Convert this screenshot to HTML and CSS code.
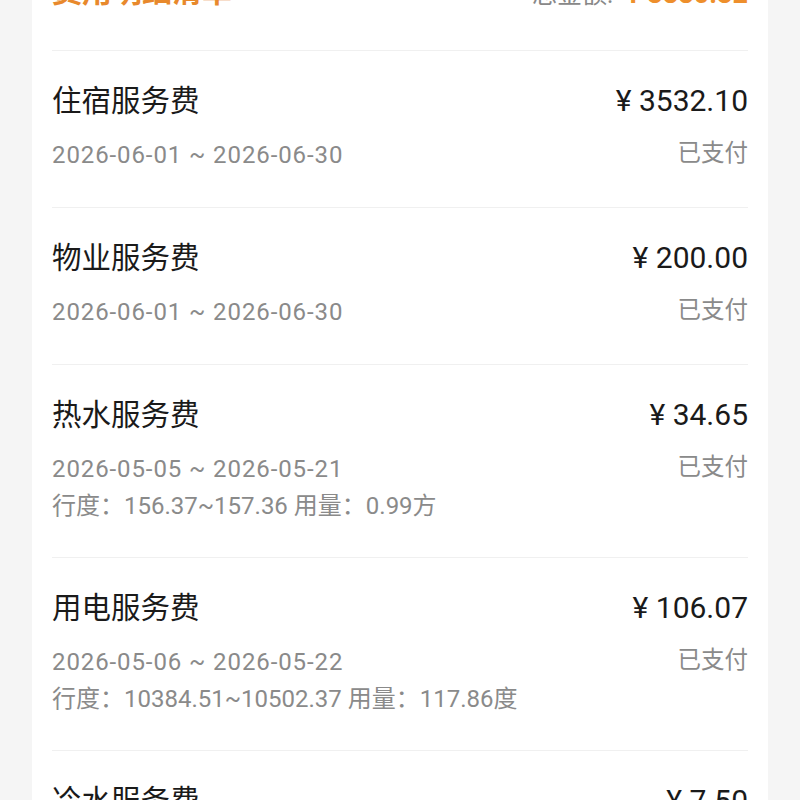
FILE: index.html
```html
<!DOCTYPE html>
<html lang="zh-CN">
<head>
<meta charset="utf-8">
<title>费用明细清单</title>
<link rel="stylesheet" href="styles.css">
</head>
<body>
<div class="page">
  <div class="card">
    <div class="header">
      <div class="header-title">费用明细清单</div>
      <div class="header-total"><span class="total-label">总金额:</span><span class="total-value">¥ 3880.32</span></div>
    </div>
    <div class="row">
      <div class="left">
        <div class="name">住宿服务费</div>
        <div class="sub date">2026-06-01 ~ 2026-06-30</div>
      </div>
      <div class="right">
        <div class="amount">¥ 3532.10</div>
        <div class="status">已支付</div>
      </div>
    </div>
    <div class="row">
      <div class="left">
        <div class="name">物业服务费</div>
        <div class="sub date">2026-06-01 ~ 2026-06-30</div>
      </div>
      <div class="right">
        <div class="amount">¥ 200.00</div>
        <div class="status">已支付</div>
      </div>
    </div>
    <div class="row">
      <div class="left">
        <div class="name">热水服务费</div>
        <div class="sub date">2026-05-05 ~ 2026-05-21</div>
        <div class="sub usage">行度：156.37~157.36 用量：0.99方</div>
      </div>
      <div class="right">
        <div class="amount">¥ 34.65</div>
        <div class="status">已支付</div>
      </div>
    </div>
    <div class="row">
      <div class="left">
        <div class="name">用电服务费</div>
        <div class="sub date">2026-05-06 ~ 2026-05-22</div>
        <div class="sub usage">行度：10384.51~10502.37 用量：117.86度</div>
      </div>
      <div class="right">
        <div class="amount">¥ 106.07</div>
        <div class="status">已支付</div>
      </div>
    </div>
    <div class="row">
      <div class="left">
        <div class="name">冷水服务费</div>
        <div class="sub date">2026-05-06 ~ 2026-05-22</div>
      </div>
      <div class="right">
        <div class="amount">¥ 7.50</div>
        <div class="status">已支付</div>
      </div>
    </div>
  </div>
</div>
</body>
</html>
```
FILE: styles.css
```css
html, body {
  margin: 0;
  padding: 0;
  background: #f5f5f5;
}
body {
  font-family: Roboto, "Noto Sans CJK SC", sans-serif;
  color: #1a1a1a;
  overflow: hidden;
  height: 800px;
}
.page {
  margin-top: -58px;
  padding: 0 32px;
}
.card {
  background: #ffffff;
  padding: 0 20px;
}
.header {
  display: flex;
  justify-content: space-between;
  align-items: center;
  padding: 30px 0 38px;
  border-bottom: 1px solid #f0f0f0;
}
.header-title {
  font-size: 30px;
  line-height: 40px;
  font-weight: 700;
  color: #e8892c;
}
.header-total {
  display: flex;
  align-items: baseline;
  gap: 13px;
}
.total-label {
  font-size: 25px;
  color: #888888;
}
.total-value {
  font-size: 27px;
  font-weight: 700;
  color: #ee8f2c;
}
.row {
  display: flex;
  justify-content: space-between;
  padding: 30px 0 33px;
  border-bottom: 1px solid #f0f0f0;
}
.name {
  font-size: 29.5px;
  line-height: 40px;
  color: #1a1a1a;
  margin-bottom: 15px;
}
.sub {
  font-size: 24px;
  line-height: 38px;
  color: #8a8a8a;
}
.date {
  letter-spacing: 0.9px;
}
.usage {
  line-height: 36px;
}
.right {
  display: flex;
  flex-direction: column;
  align-items: flex-end;
}
.amount {
  font-size: 30px;
  line-height: 40px;
  font-weight: 400;
  color: #1a1a1a;
  margin-bottom: 13px;
}
.status {
  font-size: 23.5px;
  line-height: 38px;
  color: #8a8a8a;
}
```
